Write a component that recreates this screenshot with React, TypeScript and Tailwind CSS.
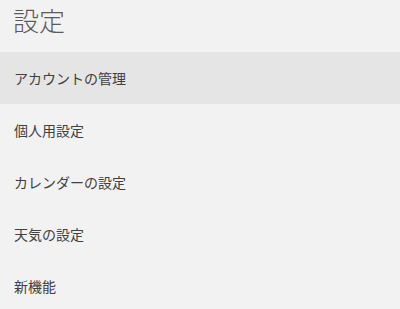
const items = ["アカウントの管理", "個人用設定", "カレンダーの設定", "天気の設定", "新機能"];

export default function App() {
  return (
    <div
      className="w-[400px] h-[309px] overflow-hidden bg-[#f2f2f2]"
      style={{ fontFamily: '"Noto Sans CJK JP", "Noto Sans", sans-serif' }}
    >
      {/* Header */}
      <div className="h-[52px] px-[13px] flex items-center">
        <h1 className="text-[26px] leading-none font-light text-[#5a5a5a] -mt-[12px]">設定</h1>
      </div>

      {/* Menu */}
      <ul>
        {items.map((label, i) => (
          <li
            key={label}
            className={`h-[52px] px-[14px] flex items-center text-[14px] text-[#404040] ${
              i === 0 ? "bg-[#e5e5e5]" : ""
            }`}
          >
            {label}
          </li>
        ))}
      </ul>
    </div>
  );
}
